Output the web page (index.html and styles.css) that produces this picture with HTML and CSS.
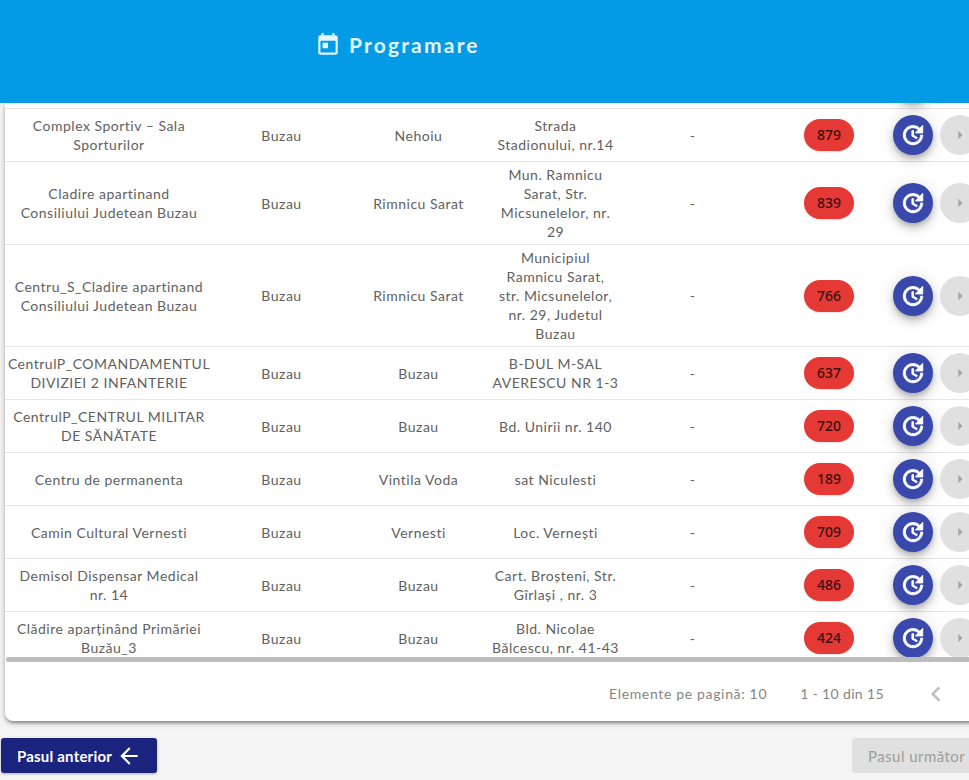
FILE: index.html
```html
<!DOCTYPE html>
<html lang="ro">
<head>
    <meta charset="UTF-8">
    <meta name="viewport" content="width=device-width, initial-scale=1.0">
    <title>Programare</title>
    <link rel="stylesheet" href="styles.css">
</head>
<body>

    <svg class="icon-defs" width="0" height="0" aria-hidden="true">
        <symbol id="ic-update" viewBox="0 0 24 24"><path d="M21 10.12h-6.78l2.74-2.82c-2.73-2.7-7.15-2.8-9.88-.1-2.73 2.71-2.73 7.08 0 9.79s7.15 2.71 9.88 0C18.32 15.65 19 14.08 19 12.1h2c0 1.98-.88 4.55-2.64 6.29-3.51 3.48-9.21 3.48-12.72 0-3.5-3.47-3.53-9.11-.02-12.58s9.14-3.47 12.65 0L21 3v7.12zM12.5 8v4.25l3.5 2.08-.72 1.21L11 13V8h1.5z"/></symbol>
        <symbol id="ic-next" viewBox="0 0 24 24"><path d="M10 17l5-5-5-5v10z"/></symbol>
    </svg>

    <!-- HEADER -->
    <header class="header">
        <svg class="header-icon" viewBox="0 0 24 24"><path d="M19 3h-1V1h-2v2H8V1H6v2H5c-1.11 0-1.99.9-1.99 2L3 19c0 1.1.89 2 2 2h14c1.1 0 2-.9 2-2V5c0-1.1-.9-2-2-2zm0 16H5V8h14v11zM7 10h5v5H7z"/></svg>
        <h1>Programare</h1>
    </header>

    <!-- CARD -->
    <main class="card">
        <div class="table-scroll">
            <table class="centers">
                <colgroup>
                    <col class="col-name"><col class="col-std"><col class="col-std"><col class="col-std"><col class="col-std"><col class="col-count"><col class="col-actions">
                </colgroup>
                <tbody>
                    <tr>
                        <td></td><td></td><td></td><td></td><td></td><td></td>
                        <td class="actions"><button class="round-btn primary"><svg><use href="#ic-update"/></svg></button></td>
                    </tr>
                    <tr>
                        <td>Complex Sportiv – Sala<br>Sporturilor</td><td>Buzau</td><td>Nehoiu</td><td>Strada<br>Stadionului, nr.14</td><td>-</td>
                        <td class="count"><span class="badge">879</span></td>
                        <td class="actions"><button class="round-btn primary"><svg><use href="#ic-update"/></svg></button><button class="round-btn muted"><svg><use href="#ic-next"/></svg></button></td>
                    </tr>
                    <tr>
                        <td>Cladire apartinand<br>Consiliului Judetean Buzau</td><td>Buzau</td><td>Rimnicu Sarat</td><td>Mun. Ramnicu<br>Sarat, Str.<br>Micsunelelor, nr.<br>29</td><td>-</td>
                        <td class="count"><span class="badge">839</span></td>
                        <td class="actions"><button class="round-btn primary"><svg><use href="#ic-update"/></svg></button><button class="round-btn muted"><svg><use href="#ic-next"/></svg></button></td>
                    </tr>
                    <tr>
                        <td>Centru_S_Cladire apartinand<br>Consiliului Judetean Buzau</td><td>Buzau</td><td>Rimnicu Sarat</td><td>Municipiul<br>Ramnicu Sarat,<br>str. Micsunelelor,<br>nr. 29, Judetul<br>Buzau</td><td>-</td>
                        <td class="count"><span class="badge">766</span></td>
                        <td class="actions"><button class="round-btn primary"><svg><use href="#ic-update"/></svg></button><button class="round-btn muted"><svg><use href="#ic-next"/></svg></button></td>
                    </tr>
                    <tr>
                        <td>CentrulP_COMANDAMENTUL<br>DIVIZIEI 2 INFANTERIE</td><td>Buzau</td><td>Buzau</td><td>B-DUL M-SAL<br>AVERESCU NR 1-3</td><td>-</td>
                        <td class="count"><span class="badge">637</span></td>
                        <td class="actions"><button class="round-btn primary"><svg><use href="#ic-update"/></svg></button><button class="round-btn muted"><svg><use href="#ic-next"/></svg></button></td>
                    </tr>
                    <tr>
                        <td>CentrulP_CENTRUL MILITAR<br>DE SĂNĂTATE</td><td>Buzau</td><td>Buzau</td><td>Bd. Unirii nr. 140</td><td>-</td>
                        <td class="count"><span class="badge">720</span></td>
                        <td class="actions"><button class="round-btn primary"><svg><use href="#ic-update"/></svg></button><button class="round-btn muted"><svg><use href="#ic-next"/></svg></button></td>
                    </tr>
                    <tr>
                        <td>Centru de permanenta</td><td>Buzau</td><td>Vintila Voda</td><td>sat Niculesti</td><td>-</td>
                        <td class="count"><span class="badge">189</span></td>
                        <td class="actions"><button class="round-btn primary"><svg><use href="#ic-update"/></svg></button><button class="round-btn muted"><svg><use href="#ic-next"/></svg></button></td>
                    </tr>
                    <tr>
                        <td>Camin Cultural Vernesti</td><td>Buzau</td><td>Vernesti</td><td>Loc. Vernești</td><td>-</td>
                        <td class="count"><span class="badge">709</span></td>
                        <td class="actions"><button class="round-btn primary"><svg><use href="#ic-update"/></svg></button><button class="round-btn muted"><svg><use href="#ic-next"/></svg></button></td>
                    </tr>
                    <tr>
                        <td>Demisol Dispensar Medical<br>nr. 14</td><td>Buzau</td><td>Buzau</td><td>Cart. Broșteni, Str.<br>Gîrlași , nr. 3</td><td>-</td>
                        <td class="count"><span class="badge">486</span></td>
                        <td class="actions"><button class="round-btn primary"><svg><use href="#ic-update"/></svg></button><button class="round-btn muted"><svg><use href="#ic-next"/></svg></button></td>
                    </tr>
                    <tr>
                        <td>Clădire aparținând Primăriei<br>Buzău_3</td><td>Buzau</td><td>Buzau</td><td>Bld. Nicolae<br>Bălcescu, nr. 41-43</td><td>-</td>
                        <td class="count"><span class="badge">424</span></td>
                        <td class="actions"><button class="round-btn primary"><svg><use href="#ic-update"/></svg></button><button class="round-btn muted"><svg><use href="#ic-next"/></svg></button></td>
                    </tr>
                </tbody>
            </table>
        </div>
        <div class="scrollbar"></div>

        <!-- PAGINATOR -->
        <div class="paginator">
            <span>Elemente pe pagină: 10</span>
            <span class="range">1 - 10 din 15</span>
            <svg class="page-prev" viewBox="0 0 24 24"><path d="M15.41 7.41L14 6l-6 6 6 6 1.41-1.41L10.83 12z"/></svg>
        </div>
    </main>

    <!-- STEP BUTTONS -->
    <div class="steps">
        <button class="step-btn back">Pasul anterior
            <svg viewBox="0 0 24 24"><path d="M20 11H7.83l5.59-5.59L12 4l-8 8 8 8 1.41-1.41L7.83 13H20v-2z"/></svg>
        </button>
        <button class="step-btn next" disabled>Pasul următor</button>
    </div>

</body>
</html>
```

FILE: styles.css
```css
* { margin: 0; padding: 0; box-sizing: border-box; }
html, body { height: 780px; overflow: hidden; }
body {
    width: 969px; background: #f5f5f5; color: #616161;
    font-family: Lato, "Noto Sans", sans-serif; font-size: 14px;
}

.icon-defs { position: absolute; }

/* HEADER */
.header {
    position: relative; z-index: 2;
    height: 103px; background: #039be5; color: #e3f5fd;
    display: flex; align-items: center;
    padding: 0 0 14px 315px;
}

.header-icon { width: 26px; height: 26px; fill: currentColor; }

.header h1 {
    font-size: 21px; font-weight: 700; letter-spacing: 2.2px;
    margin-left: 8px;
}

/* CARD */
.card {
    width: 1020px; height: 618px; margin-left: 5px;
    background: #fff; border-radius: 0 0 8px 8px;
    box-shadow: 0 3px 3px -1px rgba(0,0,0,0.3), 0 2px 6px rgba(0,0,0,0.25);
    display: flex; flex-direction: column;
}

.table-scroll { height: 554px; overflow: hidden; }

.centers {
    width: 1020px; margin-top: -47px;
    border-collapse: separate; border-spacing: 0; table-layout: fixed;
}

.col-name { width: 208px; }
.col-std { width: 137px; }
.col-count { width: 127px; }

.centers td {
    height: 53px; padding: 3px 0;
    border-bottom: 1px solid #e6e6e6;
    text-align: center; line-height: 19px; white-space: nowrap;
    letter-spacing: 0.5px;
}

.centers td.count { padding-left: 9px; }
.centers td.actions { text-align: left; padding-left: 5px; }

.badge {
    display: inline-block; width: 50px; height: 32px; line-height: 32px;
    background: #e53935; color: #3a1010; border-radius: 16px;
    font-family: "Noto Sans", sans-serif; font-weight: 500; letter-spacing: 0;
    box-shadow: 0 1px 2px rgba(0,0,0,0.12);
}

.round-btn {
    width: 40px; height: 40px; border: 0; border-radius: 50%;
    display: inline-flex; align-items: center; justify-content: center;
    vertical-align: middle;
}

.round-btn svg { width: 26px; height: 26px; fill: currentColor; stroke: currentColor; stroke-width: 0.8; }

.round-btn.primary {
    background: #3949ab; color: #fff; margin-right: 7px;
    box-shadow: 0 3px 5px -1px rgba(0,0,0,0.2), 0 6px 10px rgba(0,0,0,0.14), 0 1px 18px rgba(0,0,0,0.12);
}

.round-btn.muted { background: #e0e0e0; color: #a6a6a6; }
.round-btn.muted svg { width: 20px; height: 20px; stroke: none; }

.scrollbar { height: 5px; background: #bdbdbd; border-radius: 3px 0 0 3px; margin-left: 1px; }

/* PAGINATOR */
.paginator {
    flex: 1; display: flex; align-items: center;
    padding: 3px 0 0 604px; color: #858585;
    letter-spacing: 0.66px;
}

.range { margin-left: 33px; letter-spacing: 0.35px; }

.page-prev { width: 30px; height: 30px; margin-left: 37px; fill: #bdbdbd; margin-top: 2px; }

/* STEP BUTTONS */
.steps {
    width: 1000px; padding: 17px 0 0 1px;
    display: flex; justify-content: space-between;
}

.step-btn {
    height: 35px; border: 0; border-radius: 3px;
    font-family: inherit; font-size: 15px;
    display: flex; align-items: center;
}

.step-btn.back {
    width: 156px; padding-left: 16px; background: #1a237e; color: #fff;
    font-weight: 700; letter-spacing: 0.2px; box-shadow: 0 1px 3px rgba(0,0,0,0.3);
}

.step-btn.back svg { width: 26px; height: 26px; fill: #fff; margin-left: 4px; }

.step-btn.next {
    width: 148px; padding-left: 16px; background: #e0e0e0; color: #9e9e9e;
    letter-spacing: 0.45px;
}
```
